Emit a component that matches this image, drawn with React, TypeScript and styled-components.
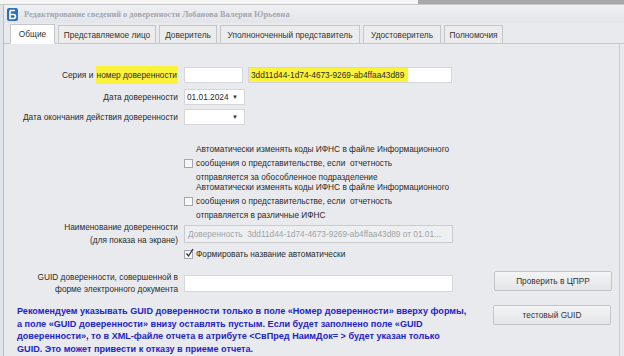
import React from "react";
import styled, { createGlobalStyle } from "styled-components";

const GlobalStyle = createGlobalStyle`
  html, body {
    margin: 0;
    padding: 0;
    background: #f0f0f0;
  }
  body {
    font-family: "Liberation Sans", Arial, sans-serif;
    font-size: 8.3px;
    color: #2a2a2a;
  }
`;

const Screen = styled.div`
  width: 624px;
  height: 356px;
  overflow: hidden;
  display: flex;
  flex-direction: column;
  background: #f0f0f0;
`;

const BackStrip = styled.div`
  height: 4px;
  flex: 0 0 auto;
  display: flex;
  background: #f4f4f4;
  border-bottom: 1px solid #c8c8c8;
`;

const BackStripDark = styled.div`
  margin-left: auto;
  width: 206px;
  background: #a9a9a9;
`;

const Body = styled.div`
  flex: 1 1 auto;
  display: flex;
  min-height: 0;
`;

const LeftEdge = styled.div`
  width: 3px;
  flex: 0 0 auto;
  background: #dfe3ea;
  border-right: 1px solid #b9bec6;
`;

const Window = styled.div`
  flex: 1 1 auto;
  display: flex;
  flex-direction: column;
  background: #e9eaed;
  min-width: 0;
`;

const TitleBar = styled.div`
  height: 18px;
  flex: 0 0 auto;
  display: flex;
  align-items: center;
  gap: 6px;
  padding-left: 3px;
  background: linear-gradient(#eef0f3, #e3e5e9);
`;

const Title = styled.span`
  font-family: "Liberation Serif", "DejaVu Serif", serif;
  font-weight: bold;
  font-size: 8.3px;
  color: #a3a8b0;
`;

const TabBar = styled.div`
  display: flex;
  flex: 0 0 auto;
  gap: 3px;
  padding-left: 6px;
  height: 20px;
  align-items: flex-end;
  border-bottom: 1px solid #c4c6ca;
`;

const Tab = styled.div<{ $active?: boolean; $w: number }>`
  width: ${(p) => p.$w}px;
  height: ${(p) => (p.$active ? "20px" : "18px")};
  box-sizing: border-box;
  display: flex;
  align-items: center;
  justify-content: center;
  background: ${(p) => (p.$active ? "#ffffff" : "#ececec")};
  border: 1px solid #c4c6ca;
  border-bottom: ${(p) => (p.$active ? "1px solid #ffffff" : "none")};
  margin-bottom: ${(p) => (p.$active ? "-1px" : "0")};
  color: #333;
  white-space: nowrap;
`;

const Panel = styled.div`
  flex: 1 1 auto;
  margin: 0 4px 0 4px;
  padding: 23px 0 0 9px;
  background: #e9eaed;
  border-right: 1px solid #c9cbcf;
  display: flex;
  flex-direction: column;
`;

const Row = styled.div<{ $top?: number }>`
  display: flex;
  align-items: center;
  margin-top: ${(p) => p.$top ?? 0}px;
`;

const Label = styled.div<{ $lh?: number }>`
  width: 167px;
  flex: 0 0 auto;
  text-align: right;
  padding-right: 6px;
  box-sizing: border-box;
  line-height: ${(p) => p.$lh ?? 12}px;
  white-space: nowrap;
`;

const Mark = styled.span`
  background: #fbf23a;
  padding: 4px 1px;
`;

const Input = styled.div<{ $w: number; $h?: number; $disabled?: boolean }>`
  width: ${(p) => p.$w}px;
  height: ${(p) => p.$h ?? 16}px;
  flex: 0 0 auto;
  box-sizing: border-box;
  display: flex;
  align-items: center;
  background: ${(p) => (p.$disabled ? "#eeeff1" : "#ffffff")};
  border: 1px solid ${(p) => (p.$disabled ? "#c9cbce" : "#d4d6d9")};
  color: ${(p) => (p.$disabled ? "#a0a3a8" : "#2a2a2a")};
  overflow: hidden;
  white-space: nowrap;
`;

const InputText = styled.span`
  padding-left: 3px;
`;

const GuidMark = styled.span`
  background: #fbf23a;
  padding: 3px 4px 3px 2px;
`;

const Select = styled(Input)`
  justify-content: space-between;
  padding: 0 6px 0 2px;
`;

const Arrow = styled.span`
  font-size: 6px;
  color: #333;
`;

const Controls = styled.div`
  display: flex;
  gap: 5px;
`;

const CheckRow = styled.div<{ $top?: number }>`
  display: flex;
  align-items: center;
  gap: 3px;
  margin-top: ${(p) => p.$top ?? 0}px;
  margin-left: 167px;
`;

const Box = styled.div`
  width: 9px;
  height: 9px;
  flex: 0 0 auto;
  box-sizing: border-box;
  border: 1px solid #a5a8ad;
  background: #f7f7f7;
  position: relative;
`;

const CheckText = styled.div`
  line-height: 14px;
  white-space: nowrap;
`;

const Btn = styled.div`
  width: 118px;
  height: 20px;
  box-sizing: border-box;
  display: flex;
  align-items: center;
  justify-content: center;
  border: 1px solid #c2c4c8;
  border-radius: 2px;
  background: linear-gradient(#f4f4f5, #e4e5e7);
  color: #333;
`;

const ButtonSlot = styled.div<{ $left?: number }>`
  margin-left: ${(p) => p.$left ?? 0}px;
  align-self: flex-start;
`;

const NoticeRow = styled.div`
  display: flex;
  align-items: flex-start;
  margin-top: 10px;
`;

const Notice = styled.div`
  width: 476px;
  flex: 0 0 auto;
  font-family: "Liberation Sans", Arial, sans-serif;
  font-weight: bold;
  font-size: 9.1px;
  line-height: 12.5px;
  color: #2424c4;
  white-space: pre;
`;

function TitleIcon() {
  return (
    <svg width="11" height="13" viewBox="0 0 11 13">
      <rect x="0" y="0" width="11" height="13" rx="2" fill="#2b6fc2" />
      <path
        d="M3 2.5 H8 M3 2.5 V10.5 H6.5 a2 2 0 0 0 0 -4 H3"
        stroke="#fff"
        strokeWidth="1.6"
        fill="none"
      />
    </svg>
  );
}

function CheckMark() {
  return (
    <svg
      width="9"
      height="10"
      viewBox="0 0 9 10"
      style={{ position: "absolute", left: 0, top: -3 }}
    >
      <path d="M1.5 5.5 L3.5 8 L8 1" stroke="#333" strokeWidth="1.3" fill="none" />
    </svg>
  );
}

const tabs: [string, number][] = [
  ["Общие", 45],
  ["Представляемое лицо", 98],
  ["Доверитель", 58],
  ["Уполноноченный представитель", 140],
  ["Удостоверитель", 78],
  ["Полномочия", 59],
];

const notice =
  "Рекомендуем указывать GUID доверенности только в поле «Номер доверенности» вверху формы,\n" +
  "а поле «GUID доверенности» внизу оставлять пустым. Если будет заполнено поле «GUID\n" +
  "доверенности», то в XML-файле отчета в атрибуте <СвПред НаимДок= > будет указан только\n" +
  "GUID. Это может привести к отказу в приеме отчета.";

export default function App() {
  return (
    <Screen>
      <GlobalStyle />
      <BackStrip>
        <BackStripDark />
      </BackStrip>
      <Body>
        <LeftEdge />
        <Window>
          <TitleBar>
            <TitleIcon />
            <Title>Редактирование сведений о доверенности Лобанова Валерия Юрьевна</Title>
          </TitleBar>
          <TabBar>
            {tabs.map(([t, w], i) => (
              <Tab key={t} $w={w} $active={i === 0}>
                {t}
              </Tab>
            ))}
          </TabBar>
          <Panel>
            <Row>
              <Label>
                Серия и <Mark>номер доверенности</Mark>
              </Label>
              <Controls>
                <Input $w={59} />
                <Input $w={204}>
                  <GuidMark>3dd11d44-1d74-4673-9269-ab4ffaa43d89</GuidMark>
                </Input>
              </Controls>
            </Row>
            <Row $top={6}>
              <Label>Дата доверенности</Label>
              <Select $w={61}>
                <span>01.01.2024</span>
                <Arrow>▼</Arrow>
              </Select>
            </Row>
            <Row $top={4}>
              <Label>Дата окончания действия доверенности</Label>
              <Select $w={61}>
                <span />
                <Arrow>▼</Arrow>
              </Select>
            </Row>
            <CheckRow $top={17}>
              <Box />
              <CheckText>
                Автоматически изменять коды ИФНС в файле Информационного
                <br />
                сообщения о представительстве, если&nbsp; отчетность
                <br />
                отправляется за обособленное подразделение
              </CheckText>
            </CheckRow>
            <CheckRow $top={-4}>
              <Box />
              <CheckText>
                Автоматически изменять коды ИФНС в файле Информационного
                <br />
                сообщения о представительстве, если&nbsp; отчетность
                <br />
                отправляется в различные ИФНС
              </CheckText>
            </CheckRow>
            <Row $top={-1}>
              <Label $lh={13}>
                Наименование доверенности
                <br />
                (для показа на экране)
              </Label>
              <Input $w={269} $h={18} $disabled>
                <InputText>
                  Доверенность&nbsp; 3dd11d44-1d74-4673-9269-ab4ffaa43d89 от 01.01...
                </InputText>
              </Input>
            </Row>
            <CheckRow>
              <Box>
                <CheckMark />
              </Box>
              <CheckText>Формировать название автоматически</CheckText>
            </CheckRow>
            <Row $top={10}>
              <Label>
                GUID доверенности, совершенной в
                <br />
                форме электронного документа
              </Label>
              <Input $w={269} $h={17} />
              <ButtonSlot $left={41}>
                <Btn>Проверить в ЦПРР</Btn>
              </ButtonSlot>
            </Row>
            <NoticeRow>
              <Notice>{notice}</Notice>
              <ButtonSlot>
                <Btn>тестовый GUID</Btn>
              </ButtonSlot>
            </NoticeRow>
          </Panel>
        </Window>
      </Body>
    </Screen>
  );
}
